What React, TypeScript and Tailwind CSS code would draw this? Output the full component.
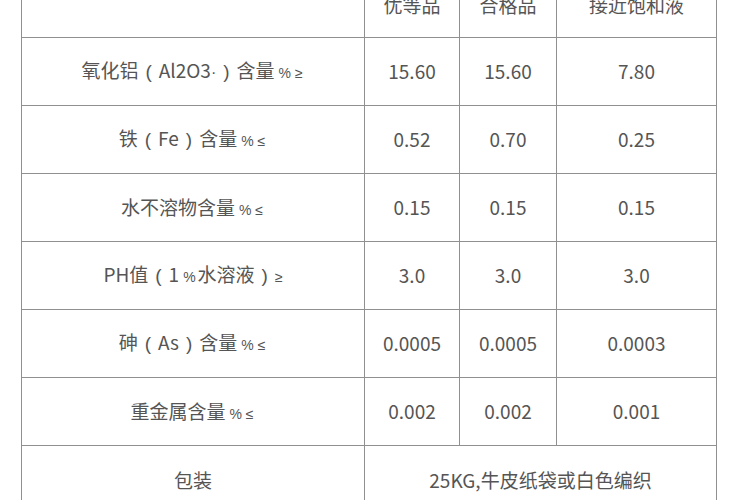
const latin = { fontFamily: '"Liberation Sans", sans-serif' }

// small "% ≥" marks after the labels
function Small({ children }: { children: React.ReactNode }) {
  return (
    <span className="text-[14px] ml-[4px] mr-[2px]" style={latin}>
      {children}
    </span>
  )
}

// parentheses sit centred with room on both sides
function P({ children }: { children: React.ReactNode }) {
  return (
    <span className="mx-[7px]" style={latin}>
      {children}
    </span>
  )
}

const ROWS: { label: React.ReactNode; values: string[] }[] = [
  {
    label: (
      <>
        氧化铝<P>(</P>Al2O3
        <span className="text-[16px]" style={latin}>
          ·
        </span>
        <P>)</P>含量<Small>% ≥</Small>
      </>
    ),
    values: ['15.60', '15.60', '7.80'],
  },
  {
    label: (
      <>
        铁<P>(</P>Fe<P>)</P>含量<Small>% ≤</Small>
      </>
    ),
    values: ['0.52', '0.70', '0.25'],
  },
  {
    label: (
      <>
        水不溶物含量<Small>% ≤</Small>
      </>
    ),
    values: ['0.15', '0.15', '0.15'],
  },
  {
    label: (
      <>
        PH值<P>(</P>1<Small>%</Small>水溶液<P>)</P>
        <span className="text-[14px]" style={latin}>
          ≥
        </span>
      </>
    ),
    values: ['3.0', '3.0', '3.0'],
  },
  {
    label: (
      <>
        砷<P>(</P>As<P>)</P>含量<Small>% ≤</Small>
      </>
    ),
    values: ['0.0005', '0.0005', '0.0003'],
  },
  {
    label: (
      <>
        重金属含量<Small>% ≤</Small>
      </>
    ),
    values: ['0.002', '0.002', '0.001'],
  },
]

const cell = 'border border-[#909090] text-center align-middle'

export default function App() {
  return (
    <div
      className="w-[750px] h-[500px] overflow-hidden bg-white text-[#555] text-[19px]"
      style={{ fontFamily: '"Noto Sans CJK SC", "Liberation Sans", sans-serif' }}
    >
      <table className="ml-[21px] mt-[-27px] w-[695px] table-fixed border-collapse">
        <colgroup>
          <col className="w-[343px]" />
          <col className="w-[95px]" />
          <col className="w-[97px]" />
          <col className="w-[160px]" />
        </colgroup>
        <tbody>
          {/* header row, cut off at the top of the picture */}
          <tr className="h-[64px]">
            <td className={cell}></td>
            <td className={cell}>优等品</td>
            <td className={cell}>合格品</td>
            <td className={cell}>接近饱和液</td>
          </tr>
          {ROWS.map((row, i) => (
            <tr key={i} className="h-[68px]">
              <td className={cell}>{row.label}</td>
              {row.values.map((v, j) => (
                <td key={j} className={cell}>
                  {v}
                </td>
              ))}
            </tr>
          ))}
          <tr className="h-[70px]">
            <td className={cell}>包装</td>
            <td className={cell} colSpan={3}>
              25KG,牛皮纸袋或白色编织
            </td>
          </tr>
        </tbody>
      </table>
    </div>
  )
}
